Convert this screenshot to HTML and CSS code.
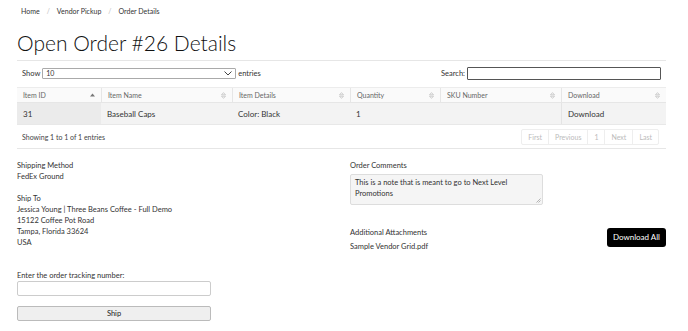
FILE: index.html
```html
<!DOCTYPE html>
<html>
<head>
<meta charset="utf-8">
<link rel="stylesheet" href="styles.css">
</head>
<body>
<div class="page">
  <nav class="crumbs">
    <span>Home</span><span class="sep">/</span><span>Vendor Pickup</span><span class="sep">/</span><span>Order Details</span>
  </nav>
  <h1 class="title">Open Order #26 Details</h1>
  <div class="rule"></div>
  <div class="controls">
    <div class="length">Show <span class="select">10<svg class="chev" width="8" height="5" viewBox="0 0 8 5"><path d="M0.5 0.5 L4 4 L7.5 0.5" fill="none" stroke="#444" stroke-width="1"/></svg></span> entries</div>
    <div class="search">Search: <span class="search-box"></span></div>
  </div>
  <div class="table">
    <div class="row head">
      <div class="cell c1">Item ID<span class="sort asc"><svg width="5" height="4" viewBox="0 0 5 4"><path d="M0 3.5 L2.5 0.5 L5 3.5Z" fill="#777"/></svg></span></div>
      <div class="cell c2">Item Name<span class="sort"><svg width="5" height="7" viewBox="0 0 5 7"><path d="M0.5 2.8 L2.5 0.6 L4.5 2.8Z M0.5 4.2 L2.5 6.4 L4.5 4.2Z" fill="none" stroke="#bbb" stroke-width="0.7"/></svg></span></div>
      <div class="cell c3">Item Details<span class="sort"><svg width="5" height="7" viewBox="0 0 5 7"><path d="M0.5 2.8 L2.5 0.6 L4.5 2.8Z M0.5 4.2 L2.5 6.4 L4.5 4.2Z" fill="none" stroke="#bbb" stroke-width="0.7"/></svg></span></div>
      <div class="cell c4">Quantity<span class="sort"><svg width="5" height="7" viewBox="0 0 5 7"><path d="M0.5 2.8 L2.5 0.6 L4.5 2.8Z M0.5 4.2 L2.5 6.4 L4.5 4.2Z" fill="none" stroke="#bbb" stroke-width="0.7"/></svg></span></div>
      <div class="cell c5">SKU Number<span class="sort"><svg width="5" height="7" viewBox="0 0 5 7"><path d="M0.5 2.8 L2.5 0.6 L4.5 2.8Z M0.5 4.2 L2.5 6.4 L4.5 4.2Z" fill="none" stroke="#bbb" stroke-width="0.7"/></svg></span></div>
      <div class="cell c6">Download<span class="sort"><svg width="5" height="7" viewBox="0 0 5 7"><path d="M0.5 2.8 L2.5 0.6 L4.5 2.8Z M0.5 4.2 L2.5 6.4 L4.5 4.2Z" fill="none" stroke="#bbb" stroke-width="0.7"/></svg></span></div>
    </div>
    <div class="row body">
      <div class="cell c1 sorted">31</div>
      <div class="cell c2">Baseball Caps</div>
      <div class="cell c3">Color: Black</div>
      <div class="cell c4">1</div>
      <div class="cell c5"></div>
      <div class="cell c6 dl">Download</div>
    </div>
  </div>
  <div class="footer">
    <div class="info">Showing 1 to 1 of 1 entries</div>
    <div class="pager">
      <span class="pg">First</span><span class="pg">Previous</span><span class="pg">1</span><span class="pg">Next</span><span class="pg">Last</span>
    </div>
  </div>
  <div class="rule rule-bottom"></div>
  <div class="details">
    <div class="left">
      <p>Shipping Method<br>FedEx Ground</p>
      <p>Ship To<br>Jessica Young | Three Beans Coffee - Full Demo<br>15122 Coffee Pot Road<br>Tampa, Florida 33624<br>USA</p>
    </div>
    <div class="right">
      <div class="label">Order Comments</div>
      <div class="comments">This is a note that is meant to go to Next Level Promotions<svg class="grip" width="5" height="5" viewBox="0 0 5 5"><path d="M4.5 0.5 L0.5 4.5 M4.5 2.5 L2.5 4.5" stroke="#888" stroke-width="0.6"/></svg></div>
      <div class="attach">
        <div>
          <div class="label">Additional Attachments</div>
          <div class="file">Sample Vendor Grid.pdf</div>
        </div>
        <span class="dl-all">Download All</span>
      </div>
    </div>
  </div>
  <div class="tracking">
    <div class="label">Enter the order tracking number:</div>
    <div class="track-input"></div>
    <div class="ship">Ship</div>
  </div>
</div>
</body>
</html>
```
FILE: styles.css
```css
* { box-sizing: border-box; }
body {
  margin: 0;
  font-family: "Lato", "Open Sans", sans-serif;
  color: #333;
  background: #fff;
}
.page {
  width: 666px;
  padding-left: 17px;
}
.crumbs {
  padding: 6px 0 0 4px;
  font-size: 7px;
  line-height: 10px;
  color: #333;
  display: flex;
}
.crumbs .sep { color: #bbb; margin: 0 7px; }
.title {
  margin: 14px 0 0 0;
  font-size: 21px;
  font-weight: 300;
  line-height: 26px;
  color: #111;
}
.rule { height: 1px; background: #e6e6e6; margin-top: 4px; }
.rule-bottom { margin-top: 3px; }
.controls {
  display: flex;
  justify-content: space-between;
  align-items: center;
  font-size: 7.5px;
  color: #333;
  padding: 4px 5px 0 5px;
  height: 20px;
}
.length { display: flex; align-items: center; gap: 2px; }
.select {
  width: 194px;
  height: 11px;
  border: 1px solid #aaa;
  border-radius: 1px;
  font-size: 7px;
  padding: 0 3px;
  display: flex;
  align-items: center;
  justify-content: space-between;
}
.search { display: flex; align-items: center; gap: 2px; }
.search-box {
  display: block;
  width: 194px;
  height: 13px;
  border: 1px solid #555;
  border-radius: 1px;
}
.table { margin-top: 6px; font-size: 7px; }
.row { display: flex; }
.cell {
  display: flex;
  align-items: center;
  justify-content: space-between;
  padding: 0 6px;
}
.head { height: 16px; background: #fafafa; border-top: 1px solid #ececec; border-bottom: 1px solid #e6e6e6; color: #666; }
.head .cell + .cell { border-left: 1px solid #e6e6e6; }
.body { height: 22px; background: #f3f3f3; border-bottom: 1px solid #e8e8e8; font-size: 8px; color: #333; }
.body .sorted { background: #ebebeb; }
.body .dl { border-left: 1px solid #e4e4e4; }
.c1 { width: 84px; }
.c2 { width: 131px; }
.c3 { width: 118px; }
.c4 { width: 90px; }
.c5 { width: 121px; }
.c6 { width: 105px; }
.sort { display: flex; align-items: center; }
.footer {
  display: flex;
  justify-content: space-between;
  align-items: center;
  height: 20px;
  padding: 4px 7px 0 5px;
  font-size: 7px;
  color: #444;
}
.pager { display: flex; border: 1px solid #eee; border-radius: 2px; height: 16px; }
.pg { display: flex; align-items: center; padding: 0 6px; color: #bbb; }
.pg + .pg { border-left: 1px solid #eee; }
.details {
  display: flex;
  margin-top: 11px;
  font-size: 7.5px;
  line-height: 11px;
  color: #333;
}
.left { width: 333px; }
.left p { margin: 0 0 11px 0; }
.right { width: 316px; }
.label { font-size: 7.5px; line-height: 11px; color: #333; }
.comments {
  position: relative;
  margin-top: 3px;
  width: 193px;
  height: 31px;
  background: #f5f5f5;
  border: 1px solid #ddd;
  border-radius: 2px;
  padding: 3px 4px;
  font-size: 7.5px;
  line-height: 10.5px;
}
.grip { position: absolute; right: 1px; bottom: 1px; }
.attach {
  display: flex;
  justify-content: space-between;
  align-items: flex-start;
  margin-top: 22px;
}
.file { margin-top: 3px; }
.dl-all {
  background: #000;
  color: #fff;
  font-size: 8px;
  border-radius: 3px;
  padding: 0 6px;
  height: 19px;
  display: flex;
  align-items: center;
  margin-top: 1px;
}
.tracking { margin-top: 11px; width: 194px; }
.track-input { height: 15px; border: 1px solid #ccc; border-radius: 2px; }
.ship {
  margin-top: 10px;
  height: 15px;
  background: #efefef;
  border: 1px solid #bbb;
  border-radius: 2px;
  font-size: 7.5px;
  color: #222;
  display: flex;
  align-items: center;
  justify-content: center;
}
```
